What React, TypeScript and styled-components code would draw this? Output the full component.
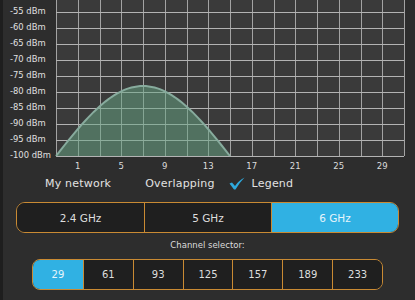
import styled, { createGlobalStyle } from "styled-components";

const GlobalStyle = createGlobalStyle`
  body {
    margin: 0;
    background: #2d2d2d;
    font-family: "DejaVu Sans", "Liberation Sans", sans-serif;
    color: #e2e2e2;
  }
`;

const Page = styled.div`
  width: 415px;
  height: 300px;
  overflow: hidden;
  box-shadow: inset 3px 0 0 #1e1e1e;
  display: flex;
  flex-direction: column;
`;

const ChartSvg = styled.svg`
  display: block;
  flex-shrink: 0;
`;

const LegendRow = styled.div`
  height: 18px;
  display: flex;
  align-items: center;
  padding-left: 45px;
  font-size: 11px;
  letter-spacing: 0.2px;
`;

const LegendText = styled.span<{ $gap?: number }>`
  margin-left: ${(p) => p.$gap ?? 0}px;
  white-space: nowrap;
`;

const CheckMark = styled.svg`
  margin-left: 14px;
  margin-right: 7px;
`;

const BandControl = styled.div`
  margin: 10px 0 0 16px;
  width: 383px;
  height: 31px;
  box-sizing: border-box;
  border: 1.5px solid #c98a33;
  border-radius: 9px;
  overflow: hidden;
  display: grid;
  grid-template-columns: repeat(3, 1fr);
`;

const Segment = styled.div<{ $active?: boolean }>`
  display: flex;
  align-items: center;
  justify-content: center;
  font-size: 10.5px;
  background: ${(p) => (p.$active ? "#30b1e3" : "#1f1f1f")};
  color: ${(p) => (p.$active ? "#e6f5fb" : "#dedede")};
  & + & {
    border-left: 1.5px solid #c98a33;
  }
`;

const SelectorLabel = styled.div`
  margin-top: 6px;
  height: 12px;
  line-height: 12px;
  text-align: center;
  font-size: 8.5px;
  color: #dcdcdc;
`;

const ChannelRow = styled.div`
  margin: 8px 0 0 32px;
  width: 351px;
  height: 31px;
  box-sizing: border-box;
  border: 1.5px solid #c98a33;
  border-radius: 8px;
  overflow: hidden;
  display: grid;
  grid-template-columns: repeat(7, 1fr);
`;

const ChannelCell = styled(Segment)`
  font-size: 10px;
`;

const PLOT_LEFT = 56;
const PLOT_RIGHT = 404;
const PLOT_BOTTOM = 156;
const COL = (PLOT_RIGHT - PLOT_LEFT) / 16;

const dbmLevels = [-55, -60, -65, -70, -75, -80, -85, -90, -95, -100];
const channelTicks = [1, 5, 9, 13, 17, 21, 25, 29];
const bands = ["2.4 GHz", "5 GHz", "6 GHz"];
const channels = [29, 61, 93, 125, 157, 189, 233];

const levelY = (i: number) => 12 + i * 16;
const channelX = (ch: number) => PLOT_LEFT + ((ch + 1) / 2) * COL;

function curvePath() {
  const start = channelX(-1);
  const end = channelX(15);
  const pts: string[] = [];
  for (let i = 0; i <= 60; i++) {
    const x = start + ((end - start) * i) / 60;
    const y = PLOT_BOTTOM - 70 * Math.sin((Math.PI * i) / 60);
    pts.push(`${x.toFixed(1)},${y.toFixed(1)}`);
  }
  return `M${pts.join(" L")}`;
}

function SignalChart() {
  const path = curvePath();
  return (
    <ChartSvg width={415} height={174} viewBox='0 0 415 174'>
      <rect
        x={PLOT_LEFT}
        y={0}
        width={PLOT_RIGHT - PLOT_LEFT}
        height={PLOT_BOTTOM}
        fill='#3a3a3a'
      />
      {Array.from({ length: 17 }, (_, i) => {
        const x = Math.round(PLOT_LEFT + i * COL) + 0.5;
        return (
          <line key={i} x1={x} y1={0} x2={x} y2={PLOT_BOTTOM} stroke='#a3a3a3' />
        );
      })}
      {dbmLevels.map((_, i) => (
        <line
          key={i}
          x1={PLOT_LEFT}
          y1={levelY(i) + 0.5}
          x2={PLOT_RIGHT}
          y2={levelY(i) + 0.5}
          stroke='#b3b3b3'
        />
      ))}
      <path d={`${path} Z`} fill='rgba(104, 168, 134, 0.5)' />
      <path d={path} fill='none' stroke='#87ab9d' strokeWidth={2} />
      {dbmLevels.map((v, i) => (
        <text
          key={v}
          x={10}
          y={levelY(i) - 1}
          dominantBaseline='central'
          fontSize={8.4}
          fill='#e0e0e0'
          fontFamily='DejaVu Sans, sans-serif'
        >
          {v} dBm
        </text>
      ))}
      {channelTicks.map((ch) => (
        <text
          key={ch}
          x={channelX(ch)}
          y={166}
          textAnchor='middle'
          dominantBaseline='central'
          fontSize={8.5}
          fill='#dcdcdc'
          fontFamily='DejaVu Sans, sans-serif'
        >
          {ch}
        </text>
      ))}
    </ChartSvg>
  );
}

export default function App() {
  return (
    <Page>
      <GlobalStyle />
      <SignalChart />
      <LegendRow>
        <LegendText>My network</LegendText>
        <LegendText $gap={34}>Overlapping</LegendText>
        <CheckMark width={16} height={13} viewBox='0 0 16 13'>
          <path
            d='M0.5 6.5 L3 5.5 L6 9 Q9.5 3.5 15.5 0.5 Q11 5 6.5 12.5 L5 12.5 Z'
            fill='#2ea9dd'
          />
        </CheckMark>
        <LegendText>Legend</LegendText>
      </LegendRow>
      <BandControl>
        {bands.map((b) => (
          <Segment key={b} $active={b === "6 GHz"}>
            {b}
          </Segment>
        ))}
      </BandControl>
      <SelectorLabel>Channel selector:</SelectorLabel>
      <ChannelRow>
        {channels.map((c) => (
          <ChannelCell key={c} $active={c === 29}>
            {c}
          </ChannelCell>
        ))}
      </ChannelRow>
    </Page>
  );
}
